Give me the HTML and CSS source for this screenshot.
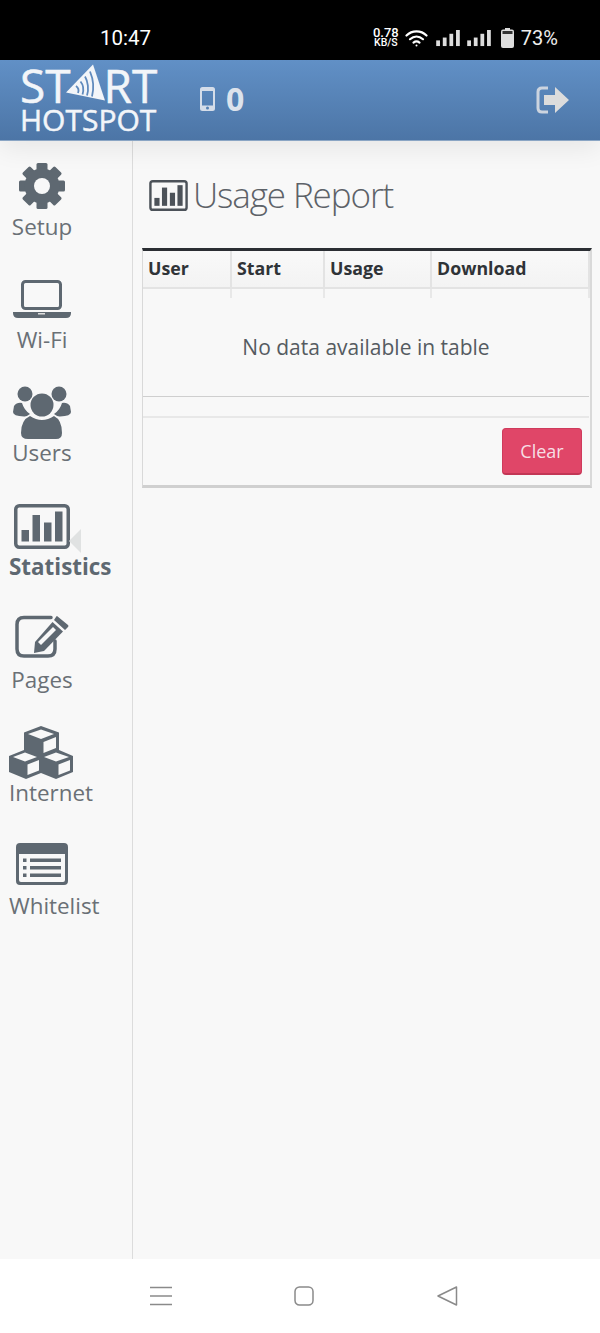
FILE: index.html
```html
<!DOCTYPE html>
<html lang="en">
<head>
  <meta charset="UTF-8">
  <title>Usage Report - Start Hotspot</title>
  <meta name="viewport" content="width=device-width, initial-scale=1.0">
  <link rel="stylesheet" href="styles.css">
</head>
<body>

<svg class="defs" width="0" height="0">
  <symbol id="chart" viewBox="0 0 56 45">
    <rect x="1.75" y="1.75" width="52.5" height="41.5" rx="3.5" fill="none" stroke="currentColor" stroke-width="3.5"/>
    <rect x="7.5" y="26" width="7.5" height="11.5" fill="currentColor"/>
    <rect x="18.5" y="11" width="7.5" height="26.5" fill="currentColor"/>
    <rect x="30" y="18.5" width="7.5" height="19" fill="currentColor"/>
    <rect x="41" y="7.5" width="7.5" height="30" fill="currentColor"/>
  </symbol>
</svg>

<!-- phone status bar -->
<div class="statusbar">
  <span class="clock">10:47</span>
  <div class="status-right">
    <div class="speed"><span>0.78</span><span>KB/S</span></div>
    <svg class="wifi" width="24" height="18" viewBox="0 0 24 18" fill="none" stroke="#fff" stroke-width="2.2" stroke-linecap="round">
      <path d="M1.5 6.5C7 1 16 1 21.5 6.5"/>
      <path d="M5 10.2C9 6.6 14 6.6 18 10.2"/>
      <path d="M8.5 13.6C10.5 12 12.5 12 14.5 13.6"/>
      <circle cx="11.5" cy="16.4" r="1" fill="#fff" stroke="none"/>
    </svg>
    <svg class="bars" width="24" height="17" viewBox="0 0 25 18" fill="#ddd">
      <rect x="0" y="11" width="4" height="6"/><rect x="7" y="8" width="4" height="9"/>
      <rect x="14" y="4" width="4" height="13"/><rect x="21" y="0" width="4" height="17"/>
    </svg>
    <svg class="bars" width="24" height="17" viewBox="0 0 25 18" fill="#ddd">
      <rect x="0" y="11" width="4" height="6"/><rect x="7" y="8" width="4" height="9"/>
      <rect x="14" y="4" width="4" height="13"/><rect x="21" y="0" width="4" height="17"/>
    </svg>
    <svg class="battery" width="13" height="20" viewBox="0 0 13 20">
      <rect x="4" y="0" width="5" height="2" fill="#ddd"/>
      <rect x="0" y="1.5" width="13" height="18.5" rx="2" fill="#ddd"/>
      <rect x="1.5" y="3" width="10" height="3" fill="#333"/>
    </svg>
    <span class="battery-pct">73%</span>
  </div>
</div>

<header class="topbar">
  <div class="logo">
    <div class="logo-start">
      <span>ST</span>
      <svg class="logo-a" width="40" height="38" viewBox="0 0 40 37">
        <path d="M27 0L39 36L0 28Z" fill="#f2f5f9"/>
        <g fill="none" stroke="#5f8abd" stroke-width="1.8">
          <path d="M24 7C27 14 28 24 26 32"/>
          <path d="M19 12C22 17 23 25 21 31"/>
          <path d="M14.500 17C17 20 18 25 16.500 30"/>
          <path d="M10 21.500C12 23 13 26 12 28.500"/>
        </g>
      </svg>
      <span>RT</span>
    </div>
    <div class="logo-hotspot">HOTSPOT</div>
  </div>
  <div class="device-count">
    <svg width="15" height="24" viewBox="0 0 15 24">
      <path fill-rule="evenodd" d="M2.500 0H12.500A2.500 2.500 0 0 1 15 2.500V21.500A2.500 2.500 0 0 1 12.500 24H2.500A2.500 2.500 0 0 1 0 21.500V2.500A2.500 2.500 0 0 1 2.500 0ZM2 4V18.500H13V4ZM7.500 19.500A1.500 1.500 0 1 0 7.500 22.500A1.500 1.500 0 1 0 7.500 19.500Z" fill="#d5dde9"/>
    </svg>
    <span>0</span>
  </div>
  <svg class="logout" width="33" height="28" viewBox="0 0 33 28">
    <path d="M12 2H6Q2 2 2 6V22Q2 26 6 26H12" fill="none" stroke="#ccd4df" stroke-width="3"/>
    <path d="M8 9H19V1L33 14L19 27V19H8Z" fill="#dcdcdc"/>
  </svg>
</header>

<div class="layout">
  <nav class="sidebar">
    <a class="nav-item">
      <span class="nav-icon">
        <svg width="46" height="46" viewBox="0 0 46 46" fill="currentColor">
          <g>
            <rect x="17.500" y="0" width="11" height="46" rx="1.500"/>
            <rect x="17.500" y="0" width="11" height="46" rx="1.500" transform="rotate(45 23 23)"/>
            <rect x="17.500" y="0" width="11" height="46" rx="1.500" transform="rotate(90 23 23)"/>
            <rect x="17.500" y="0" width="11" height="46" rx="1.500" transform="rotate(135 23 23)"/>
          </g>
          <circle cx="23" cy="23" r="17.500"/>
          <circle cx="23" cy="23" r="8" fill="#f8f8f8"/>
        </svg>
      </span>
      <span class="nav-label">Setup</span>
    </a>
    <a class="nav-item">
      <span class="nav-icon icon-wifi">
        <svg width="58" height="38" viewBox="0 0 58 38">
          <rect x="9.500" y="1.500" width="38" height="27" rx="3" fill="none" stroke="currentColor" stroke-width="3"/>
          <path d="M0 32H58V33Q58 38 53 38H5Q0 38 0 33Z" fill="currentColor"/>
          <rect x="25" y="33" width="7" height="1.500" fill="#ddd"/>
        </svg>
      </span>
      <span class="nav-label">Wi-Fi</span>
    </a>
    <a class="nav-item">
      <span class="nav-icon icon-users">
        <svg width="58" height="54" viewBox="0 0 58 54" fill="currentColor">
          <circle cx="12" cy="8" r="7.500"/>
          <circle cx="46" cy="8" r="7.500"/>
          <path d="M1 20Q4 16 9 17Q11 24 17 28Q13 31 11 30.500Q0 30 0 26Z"/>
          <path d="M57 20Q54 16 49 17Q47 24 41 28Q45 31 47 30.500Q58 30 58 26Z"/>
          <circle cx="29" cy="19" r="11.500"/>
          <path d="M17 30Q23 34 29 34Q35 34 41 30Q49 34 49 47Q49 53 43 53H15Q8 53 8 47Q8 34 17 30Z"/>
        </svg>
      </span>
      <span class="nav-label">Users</span>
    </a>
    <a class="nav-item active">
      <span class="nav-icon">
        <svg width="56" height="45"><use href="#chart"/></svg>
      </span>
      <span class="nav-label">Statistics</span>
    </a>
    <a class="nav-item">
      <span class="nav-icon icon-pages">
        <svg width="54" height="44" viewBox="0 0 54 44">
          <path d="M36 2.500H9Q2 2.500 2 9.500V34Q2 41 9 41H33Q40 41 40 34V26" fill="none" stroke="currentColor" stroke-width="3.500" stroke-linecap="round"/>
          <path d="M42 1L53 10Q54 11 53 12L50 15L39 5L41 2Q41.500 1 42 1Z" fill="currentColor"/>
          <path d="M37.500 7L48 16.500L29 36L19 38L20 27Z" fill="currentColor"/>
          <path d="M38 12L41 15L26 30L23 27Z" fill="#f8f8f8"/>
        </svg>
      </span>
      <span class="nav-label">Pages</span>
    </a>
    <a class="nav-item">
      <span class="nav-icon icon-internet">
        <svg width="64" height="53" viewBox="0 0 64 53" fill="currentColor">
          <path d="M32 0L50 6.500V24L64 30V46L47 53L32 47L17 53L0 46V30L15 24V6.500Z"/>
          <path d="M32 3.500L45 8L32 13L19 8Z" fill="#f8f8f8"/>
          <path d="M34.500 16L47 11V22L34.500 27Z" fill="#f8f8f8"/>
          <path d="M16 26.500L28 31L16 35.500L4 31Z" fill="#f8f8f8"/>
          <path d="M18.500 38.500L30 34V44.500L18.500 49Z" fill="#f8f8f8"/>
          <path d="M47 26.500L60 31L47 35.500L35 31Z" fill="#f8f8f8"/>
          <path d="M49.500 38.500L61 34V44.500L49.500 49Z" fill="#f8f8f8"/>
        </svg>
      </span>
      <span class="nav-label">Internet</span>
    </a>
    <a class="nav-item">
      <span class="nav-icon icon-list">
        <svg width="52" height="42" viewBox="0 0 52 42" fill="currentColor">
          <path fill-rule="evenodd" d="M4 0H48Q52 0 52 4V38Q52 42 48 42H4Q0 42 0 38V4Q0 0 4 0ZM3 11V37Q3 39 5 39H47Q49 39 49 37V11Z"/>
          <rect x="7" y="15.500" width="3.500" height="3.500"/><rect x="14" y="15.500" width="31" height="3.500"/>
          <rect x="7" y="23" width="3.500" height="3.500"/><rect x="14" y="23" width="31" height="3.500"/>
          <rect x="7" y="30.500" width="3.500" height="3.500"/><rect x="14" y="30.500" width="31" height="3.500"/>
        </svg>
      </span>
      <span class="nav-label">Whitelist</span>
    </a>
  </nav>

  <main class="content">
    <h1 class="page-title">
      <svg width="39" height="31"><use href="#chart"/></svg>
      Usage Report
    </h1>

    <div class="panel">
      <table class="report">
        <thead>
          <tr>
            <th class="col-user">User</th>
            <th class="col-start">Start</th>
            <th class="col-usage">Usage</th>
            <th>Download</th>
          </tr>
        </thead>
        <tbody>
          <tr class="spacer"><td></td><td></td><td></td><td></td></tr>
          <tr class="empty"><td colspan="4">No data available in table</td></tr>
          <tr class="table-foot"><td colspan="4"></td></tr>
        </tbody>
      </table>
      <div class="panel-footer">
        <button class="btn-clear">Clear</button>
      </div>
    </div>
  </main>
</div>

<!-- android nav buttons -->
<div class="navbar">
  <svg width="22" height="20" viewBox="0 0 22 20" fill="none" stroke="#8a8a8a" stroke-width="1.500">
    <path d="M0 1.500H22M0 10H22M0 18.500H22"/>
  </svg>
  <svg class="nav-home" width="20" height="20" viewBox="0 0 20 20" fill="none" stroke="#8a8a8a" stroke-width="1.500">
    <rect x="1" y="1" width="18" height="18" rx="4.500"/>
  </svg>
  <svg width="21" height="20" viewBox="0 0 21 20" fill="none" stroke="#8a8a8a" stroke-width="1.500" stroke-linejoin="round">
    <path d="M19.500 1L1 10L19.500 19Z"/>
  </svg>
</div>

</body>
</html>
```

FILE: styles.css
```css
* { box-sizing: border-box; margin: 0; padding: 0; }
html, body { height: 1333px; overflow: hidden; }
body {
  font-family: "Open Sans", sans-serif;
  background: #f8f8f8;
  color: #5e6871;
  display: flex;
  flex-direction: column;
}
.defs { position: absolute; }

/* status bar */
.statusbar {
  height: 60px;
  flex-shrink: 0;
  background: #000;
  color: #fff;
  display: flex;
  align-items: center;
  justify-content: space-between;
  padding: 16px 42px 0 100px;
}
.clock {
  font-family: Roboto, sans-serif;
  font-size: 20.5px;
}
.status-right {
  display: flex;
  align-items: center;
}
.speed {
  display: flex;
  flex-direction: column;
  align-items: center;
  font-family: Roboto, sans-serif;
  font-weight: 500;
  line-height: 10px;
  font-size: 13px;
  width: 26px;
  margin-right: 6px;
}
.speed span + span { font-size: 10.5px; }
.wifi { margin-right: 7px; }
.bars { margin-right: 7px; }
.battery { margin: 0 7px 0 3px; }
.battery-pct {
  font-family: Roboto, sans-serif;
  font-size: 20px;
  color: #eee;
}

/* top bar */
.topbar {
  height: 81px;
  flex-shrink: 0;
  background: linear-gradient(#6190c6, #4c75a6);
  border-bottom: 1px solid #8aa5c4;
  display: flex;
  align-items: center;
  padding: 0 31px 0 20px;
  position: relative;
  z-index: 2;
  box-shadow: 0 8px 24px rgba(0, 0, 0, 0.07);
}
.logo {
  color: #f2f5f9;
  width: 137px;
  -webkit-text-stroke: 0.5px #f2f5f9;
}
.logo-start {
  display: flex;
  align-items: flex-end;
  font-size: 46px;
  line-height: 38px;
  height: 38px;
  margin-top: 2px;
}
.logo-a { margin: 0 -2px 2px -5px; flex-shrink: 0; }
.logo-hotspot {
  font-size: 30px;
  line-height: 32px;
  white-space: nowrap;
}
.device-count {
  display: flex;
  align-items: center;
  gap: 11px;
  margin-left: 43px;
  margin-bottom: 3px;
  color: #dde3ec;
  font-size: 32px;
  font-weight: 700;
}
.logout { margin-left: auto; }

/* sidebar */
.layout {
  flex: 1;
  display: flex;
  min-height: 0;
}
.sidebar {
  width: 133px;
  flex-shrink: 0;
  border-right: 1px solid #dcdcdc;
  padding-top: 22px;
}
.nav-item {
  display: block;
  height: 113.2px;
  padding-left: 9px;
  position: relative;
}
.nav-icon {
  display: flex;
  justify-content: center;
  align-items: flex-end;
  width: 66px;
  height: 46px;
}
.icon-wifi svg { margin-bottom: 4px; }
.icon-users svg { margin-bottom: -5px; }
.icon-pages svg { margin-bottom: 3px; }
.icon-internet svg { margin: 0 0 -4px -3px; }
.icon-list svg { margin-bottom: 3px; }
.nav-label {
  display: inline-block;
  min-width: 66px;
  text-align: center;
  font-size: 22.4px;
  line-height: 36px;
  color: #6a7076;
}
.nav-item.active .nav-label { font-weight: 700; color: #5e6871; }
.nav-item.active::after {
  content: "";
  position: absolute;
  left: 69px;
  top: 26px;
  border-style: solid;
  border-width: 12px 12px 12px 0;
  border-color: transparent #e0e2e2 transparent transparent;
}

/* content */
.content {
  flex: 1;
  padding: 30px 8px 0 9px;
}
.page-title {
  display: flex;
  align-items: center;
  gap: 5px;
  margin-left: 7px;
  height: 46px;
  font-size: 35px;
  font-weight: 300;
  letter-spacing: -1.1px;
  color: #5d6268;
}
.page-title svg { color: #4c5259; margin-top: 2px; }
.panel {
  margin-top: 31px;
  width: 450px;
  border-left: 1px solid #d9d9d9;
  border-right: 2px solid #d9d9d9;
  border-bottom: 3px solid #d0d0d0;
  border-top: 3px solid #2b2e33;
}
.report {
  width: 100%;
  border-collapse: collapse;
  table-layout: fixed;
}
.report th {
  height: 37px;
  text-align: left;
  padding: 0 0 2px 5px;
  font-size: 17.8px;
  color: #2f3337;
  border-bottom: 2px solid #e3e3e3;
  border-right: 2px solid #e3e3e3;
  background: linear-gradient(#f9f9f9, #f3f3f3);
}
.col-user { width: 88px; }
.col-start { width: 93px; }
.col-usage { width: 107px; }
.spacer td {
  height: 10px;
  border-right: 2px solid #e8e8e8;
}
.empty td {
  height: 98px;
  text-align: center;
  font-size: 21px;
  color: #555b61;
  border-bottom: 1px solid #cfcfcf;
}
.table-foot td {
  height: 21px;
  border-bottom: 2px solid #e8e8e8;
}
.panel-footer {
  height: 67px;
  display: flex;
  justify-content: flex-end;
  align-items: center;
  padding-right: 8px;
}
.btn-clear {
  width: 80px;
  height: 47px;
  background: #e04668;
  border: 1px solid #cf3b5c;
  border-bottom: 2px solid #c23655;
  border-radius: 4px;
  color: #f7dfe5;
  font-family: "Open Sans", sans-serif;
  font-size: 18px;
}

/* android nav */
.navbar {
  height: 74px;
  flex-shrink: 0;
  background: #fff;
  display: flex;
  align-items: center;
  justify-content: space-between;
  padding: 0 142px 0 150px;
}
.nav-home { margin-left: -2px; }
```
